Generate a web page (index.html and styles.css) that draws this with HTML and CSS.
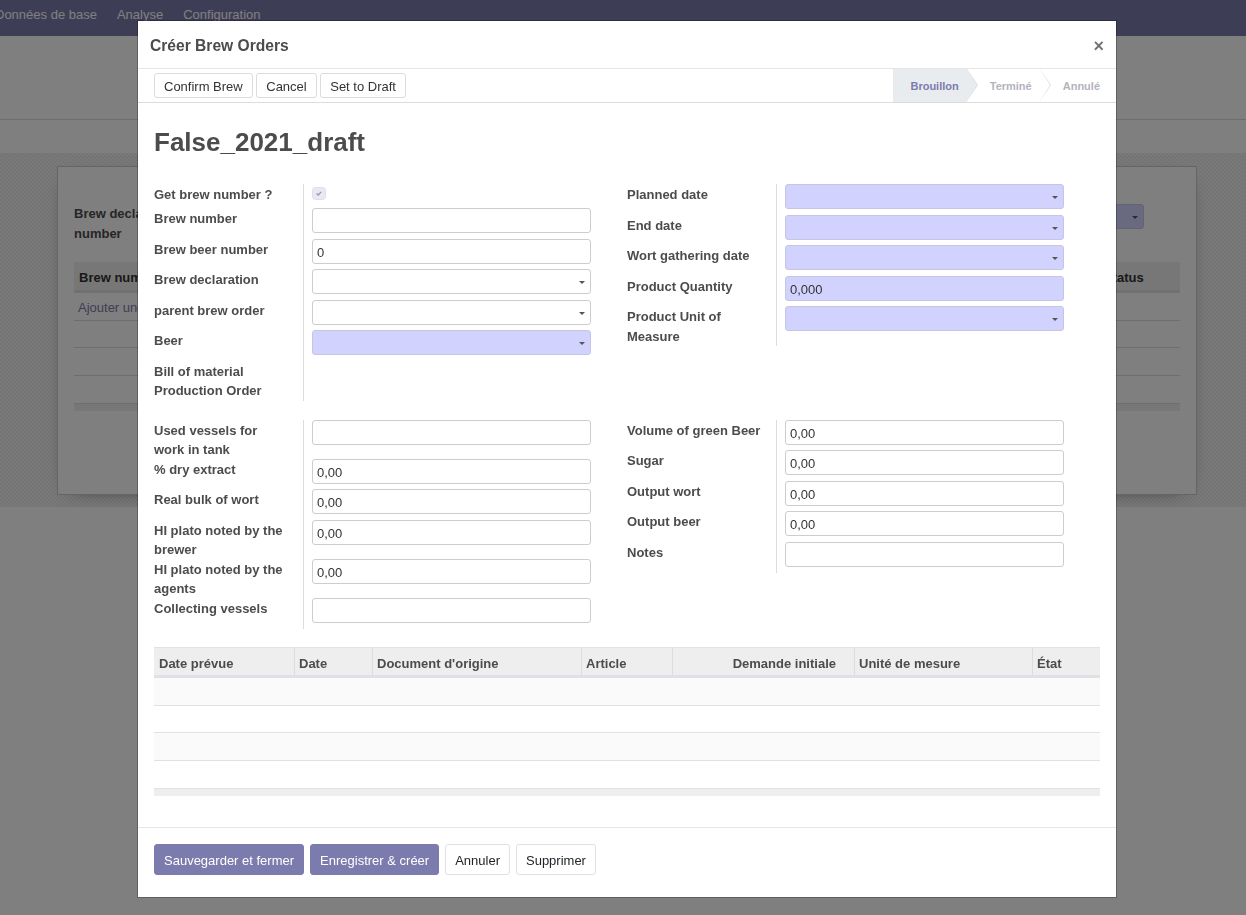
FILE: index.html
```html
<!DOCTYPE html>
<html lang="fr">
<head>
<meta charset="utf-8">
<title>Créer Brew Orders</title>
<link rel="stylesheet" href="styles.css">
</head>
<body>
<div class="app">
  <nav class="topnav">
    <ul class="menu">
      <li>Données de base</li>
      <li>Analyse</li>
      <li>Configuration</li>
    </ul>
  </nav>
  <div class="control-panel"></div>
  <div class="page-header"></div>
  <div class="sheet-bg">
    <div class="sheet">
      <div class="sheet-row">
        <div class="sheet-label">Brew declaration number</div>
        <div class="sheet-field"><div class="fld req"><span class="fld-fill"></span><span class="caret"></span></div></div>
      </div>
      <table class="bg-list">
        <colgroup><col><col><col class="c-status"></colgroup>
        <thead><tr><th>Brew number</th><th></th><th>Status</th></tr></thead>
        <tbody>
          <tr><td colspan="3" class="add-line">Ajouter une ligne</td></tr>
          <tr><td colspan="3"></td></tr>
          <tr><td colspan="3"></td></tr>
          <tr><td colspan="3"></td></tr>
        </tbody>
        <tfoot><tr><td colspan="3"></td></tr></tfoot>
      </table>
    </div>
  </div>
</div>

<div class="backdrop"></div>

<div class="modal">
  <header class="modal-header">
    <h4 class="modal-title">Créer Brew Orders</h4>
    <span class="close">×</span>
  </header>

  <div class="statusbar">
    <div class="sb-buttons">
      <button class="sb-btn">Confirm Brew</button>
      <button class="sb-btn">Cancel</button>
      <button class="sb-btn">Set to Draft</button>
    </div>
    <div class="sb-status">
      <span class="st active">Brouillon</span>
      <span class="st">Terminé</span>
      <span class="st">Annulé</span>
    </div>
  </div>

  <div class="modal-body">
    <h1 class="rec-title">False_2021_draft</h1>

    <div class="groups">
      <div class="group">
        <div class="lbl">Get brew number ?</div>
        <div class="val"><div class="chk">
          <svg width="14" height="13" viewBox="0 0 14 13"><rect x="0.5" y="0.5" width="13" height="12" rx="3" fill="#e9e9f1" stroke="#dedee9"/><path d="M4.6 6.5 L6.2 8 L9.2 4.9" fill="none" stroke="#9594bd" stroke-width="1.3"/></svg>
        </div></div>
        <div class="lbl">Brew number</div>
        <div class="val"><div class="fld"><input type="text" value=""></div></div>
        <div class="lbl">Brew beer number</div>
        <div class="val"><div class="fld"><input type="text" value="0"></div></div>
        <div class="lbl">Brew declaration</div>
        <div class="val"><div class="fld"><input type="text" value=""><span class="caret"></span></div></div>
        <div class="lbl">parent brew order</div>
        <div class="val"><div class="fld"><input type="text" value=""><span class="caret"></span></div></div>
        <div class="lbl">Beer</div>
        <div class="val"><div class="fld req"><input type="text" value=""><span class="caret"></span></div></div>
        <div class="lbl">Bill of material Production Order</div>
        <div class="val"></div>
      </div>

      <div class="group">
        <div class="lbl">Planned date</div>
        <div class="val"><div class="fld req"><input type="text" value=""><span class="caret"></span></div></div>
        <div class="lbl">End date</div>
        <div class="val"><div class="fld req"><input type="text" value=""><span class="caret"></span></div></div>
        <div class="lbl">Wort gathering date</div>
        <div class="val"><div class="fld req"><input type="text" value=""><span class="caret"></span></div></div>
        <div class="lbl">Product Quantity</div>
        <div class="val"><div class="fld req"><input type="text" value="0,000"></div></div>
        <div class="lbl">Product Unit of Measure</div>
        <div class="val"><div class="fld req"><input type="text" value=""><span class="caret"></span></div></div>
      </div>

      <div class="group">
        <div class="lbl">Used vessels for work in tank</div>
        <div class="val"><div class="fld"><input type="text" value=""></div></div>
        <div class="lbl">% dry extract</div>
        <div class="val"><div class="fld"><input type="text" value="0,00"></div></div>
        <div class="lbl">Real bulk of wort</div>
        <div class="val"><div class="fld"><input type="text" value="0,00"></div></div>
        <div class="lbl">HI plato noted by the brewer</div>
        <div class="val"><div class="fld"><input type="text" value="0,00"></div></div>
        <div class="lbl">HI plato noted by the agents</div>
        <div class="val"><div class="fld"><input type="text" value="0,00"></div></div>
        <div class="lbl">Collecting vessels</div>
        <div class="val"><div class="fld"><input type="text" value=""></div></div>
      </div>

      <div class="group">
        <div class="lbl">Volume of green Beer</div>
        <div class="val"><div class="fld"><input type="text" value="0,00"></div></div>
        <div class="lbl">Sugar</div>
        <div class="val"><div class="fld"><input type="text" value="0,00"></div></div>
        <div class="lbl">Output wort</div>
        <div class="val"><div class="fld"><input type="text" value="0,00"></div></div>
        <div class="lbl">Output beer</div>
        <div class="val"><div class="fld"><input type="text" value="0,00"></div></div>
        <div class="lbl">Notes</div>
        <div class="val"><div class="fld"><input type="text" value=""></div></div>
      </div>
    </div>

    <table class="moves">
      <colgroup>
        <col class="w1"><col class="w2"><col class="w3"><col class="w4"><col class="w5"><col class="w6"><col class="w7">
      </colgroup>
      <thead>
        <tr>
          <th>Date prévue</th>
          <th>Date</th>
          <th>Document d'origine</th>
          <th>Article</th>
          <th class="num">Demande initiale</th>
          <th>Unité de mesure</th>
          <th>État</th>
        </tr>
      </thead>
      <tbody>
        <tr><td colspan="7"></td></tr>
        <tr><td colspan="7"></td></tr>
        <tr><td colspan="7"></td></tr>
        <tr><td colspan="7"></td></tr>
      </tbody>
      <tfoot><tr><td colspan="7"></td></tr></tfoot>
    </table>
  </div>

  <footer class="modal-footer">
    <button class="btn primary">Sauvegarder et fermer</button>
    <button class="btn primary">Enregistrer &amp; créer</button>
    <button class="btn">Annuler</button>
    <button class="btn">Supprimer</button>
  </footer>
</div>
</body>
</html>
```

FILE: styles.css
```css
* { box-sizing: border-box; }

html, body {
  margin: 0;
  height: 100%;
}

body {
  font-family: "Liberation Sans", Arial, sans-serif;
  font-size: 13px;
  color: #4c4c4c;
  background: #fff;
  overflow: hidden;
}

/* ---------- background page ---------- */
.topnav {
  height: 36px;
  background: #7c7bad;
}

.menu {
  display: flex;
  list-style: none;
  margin: 0 0 0 -15px;
  padding: 0;
}

.menu li {
  padding: 0 10px;
  line-height: 30px;
  color: #fff;
}

.control-panel {
  height: 84px;
  border-bottom: 1px solid #dcdcdc;
}

.page-header {
  height: 33px;
}

.sheet-bg {
  padding: 13px 0 12px;
  background: repeating-conic-gradient(#eaeaea 0 25%, #f3f3f3 0 50%) 0 0 / 4px 4px;
}

.sheet {
  width: 1140px;
  height: 329px;
  margin-left: 57px;
  background: #fff;
  border: 1px solid #cacaca;
  box-shadow: 0 5px 20px -15px #000;
  padding: 37px 16px 0;
}

.sheet-row {
  display: grid;
  grid-template-columns: 150px 1fr;
  padding-right: 36px;
}

.sheet-label {
  font-weight: bold;
  line-height: 19.5px;
  padding-right: 30px;
}

.sheet-field {
  padding-left: 8px;
}

.bg-list {
  width: 100%;
  margin-top: 19px;
  border-spacing: 0;
}

.bg-list .c-status { width: 81px; }

.bg-list th {
  height: 31px;
  background: #eee;
  border-bottom: 3px solid #dee2e6;
  text-align: left;
  padding: 2px 4px 0 5px;
  font-weight: bold;
  color: #333;
}

.bg-list td {
  height: 27.7px;
  border-bottom: 1px solid #dcdce4;
  padding: 2px 4px 0;
}

.bg-list .add-line { color: #7c7bad; }

.bg-list tfoot td {
  height: 7px;
  padding: 0;
  border: 0;
  background: #eee;
}

.backdrop {
  position: fixed;
  inset: 0;
  background: rgba(0, 0, 0, 0.5);
}

/* ---------- modal ---------- */
.modal {
  position: fixed;
  left: 138px;
  top: 21px;
  width: 978px;
  height: 876px;
  background: #fff;
  display: flex;
  flex-direction: column;
  box-shadow: 0 0 0 1px rgba(0, 0, 0, 0.25);
}

.modal-header {
  height: 48px;
  flex: none;
  display: flex;
  align-items: center;
  justify-content: space-between;
  padding: 2px 12px 0 12px;
  border-bottom: 1px solid #e6e6e6;
}

.modal-title {
  margin: 0;
  font-size: 15.6px;
  font-weight: bold;
  color: #4c4c4c;
}

.close {
  font-size: 18px;
  font-weight: bold;
  line-height: 1;
  color: #000;
  opacity: 0.55;
}

.statusbar {
  height: 34px;
  flex: none;
  display: flex;
  justify-content: space-between;
  align-items: stretch;
  padding-left: 16px;
  border-bottom: 1px solid #dcdcdc;
}

.sb-buttons {
  display: flex;
  align-items: center;
  gap: 3.5px;
}

.sb-btn {
  height: 25.5px;
  padding: 2px 9px 0;
  font: 13px "Liberation Sans", Arial, sans-serif;
  color: #333;
  background: #fff;
  border: 1px solid #dcdcdc;
  border-radius: 3px;
}

.sb-status {
  display: flex;
  align-items: stretch;
}

.st {
  position: relative;
  display: flex;
  align-items: center;
  padding: 0 8px 0 23px;
  font-size: 11px;
  font-weight: bold;
  color: #b3b3bb;
  background: #fff;
}

.st:first-child { padding-left: 17px; }
.st:last-child { padding-left: 23px; padding-right: 16px; }

.st.active {
  background: #e9ecef;
  color: #7c7bad;
}

.st:not(:last-child)::before,
.st:not(:last-child)::after {
  content: "";
  position: absolute;
  top: 0;
  width: 0;
  height: 0;
  border-top: 16.5px solid transparent;
  border-bottom: 16.5px solid transparent;
  z-index: 1;
}

.st:not(:last-child)::before {
  right: -11px;
  border-left: 11px solid #d8dbe0;
}

.st:not(:last-child)::after {
  right: -10px;
  border-left: 10px solid #fff;
  z-index: 2;
}

.st.active::after { border-left-color: #e9ecef; }

.modal-body {
  flex: 1;
  padding: 0 16px;
  overflow: hidden;
}

.rec-title {
  margin: 24px 0 27px;
  font-size: 26px;
  line-height: 30px;
  font-weight: bold;
  color: #4c4c4c;
}

.groups {
  display: grid;
  grid-template-columns: 1fr 1fr;
  row-gap: 20px;
  align-items: start;
}

.group {
  display: grid;
  grid-template-columns: 150px 1fr;
  padding-right: 36px;
}

.lbl {
  font-weight: bold;
  line-height: 19.5px;
  padding: 1px 13px 0 0;
  margin-bottom: -1px;
  border-right: 1px solid #dcdcdc;
}

.val {
  padding-left: 8px;
}

.chk {
  height: 24px;
  padding-top: 3px;
  line-height: 0;
}

.fld {
  display: flex;
  align-items: center;
  height: 25px;
  margin-bottom: 5.5px;
  border: 1px solid #cdcdcd;
  border-radius: 3px;
  background: #fff;
}

.fld.req {
  background: #d2d2ff;
  border-color: #c6c6e4;
}

.fld input,
.fld-fill {
  flex: 1;
  min-width: 0;
  height: 100%;
  border: 0;
  outline: none;
  background: transparent;
  padding: 2px 4px 0;
  font: 13px "Liberation Sans", Arial, sans-serif;
  color: #333;
}

.caret {
  flex: none;
  width: 0;
  height: 0;
  margin: 2px 5px 0 0;
  border-left: 3px solid transparent;
  border-right: 3px solid transparent;
  border-top: 3px solid #555;
}

/* one2many table */
.moves {
  width: 100%;
  margin-top: 19px;
  border-spacing: 0;
  table-layout: fixed;
}

.moves .w1 { width: 140px; }
.moves .w2 { width: 78px; }
.moves .w3 { width: 209px; }
.moves .w4 { width: 91px; }
.moves .w5 { width: 182px; }
.moves .w6 { width: 178px; }
.moves .w7 { width: 68px; }

.moves th {
  height: 31px;
  padding: 3px 4px 0 4px;
  background: #eee;
  border-top: 1px solid #e2e2e2;
  border-left: 1px solid #dddddd;
  border-bottom: 3px solid #dee2e6;
  text-align: left;
  font-weight: bold;
  color: #4c4c4c;
  white-space: nowrap;
}

.moves th:first-child {
  border-left: 0;
  padding-left: 5px;
}

.moves th.num {
  text-align: right;
  padding-right: 18px;
}

.moves tbody td {
  height: 27.7px;
  padding: 0;
  border-bottom: 1px solid #e0e0e8;
}

.moves tbody tr:nth-child(odd) td { background: #fafafa; }

.moves tfoot td {
  height: 7px;
  padding: 0;
  background: #eee;
}

.modal-footer {
  flex: none;
  display: flex;
  gap: 6px;
  padding: 16px 16px 22px;
  border-top: 1px solid #e6e6e6;
}

.btn {
  height: 31px;
  padding: 2px 9px 0;
  font: 13px "Liberation Sans", Arial, sans-serif;
  color: #212529;
  background: #fff;
  border: 1px solid #dee2e6;
  border-radius: 3px;
}

.btn.primary {
  background: #7c7bad;
  border-color: #7c7bad;
  color: #fff;
}
```
